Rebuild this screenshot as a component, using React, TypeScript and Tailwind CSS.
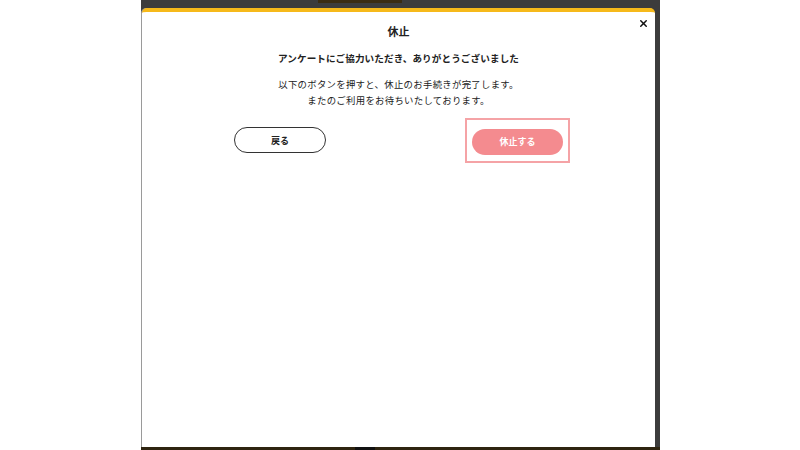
import { X } from 'lucide-react';

export default function App() {
  return (
    <div
      className="flex h-[450px] w-[800px] bg-white text-[#222]"
      style={{ fontFamily: '"Noto Sans CJK JP", "Noto Sans", sans-serif' }}
    >
      <div className="ml-[141px] flex h-full w-[519px] flex-col bg-[#3c3c3c]">
        {/* backdrop top strip */}
        <div className="flex h-[8px] shrink-0">
          <div className="ml-[177px] h-[3px] w-[84px] bg-[#3a2c12]" />
        </div>

        <div className="relative ml-px mr-[5px] flex h-[439px] shrink-0 flex-col items-center rounded-t-[5px] border-t-[4px] border-[#f6b91a] bg-white shadow-[-1px_0_0_#9a9a9a]">
          <button className="absolute right-[6px] top-[6px] text-[#111]">
            <X size={11} strokeWidth={3.2} />
          </button>

          <h2 className="mt-[11px] text-[11px] font-bold leading-4">休止</h2>
          <p className="mt-[11px] text-[9.6px] font-bold leading-4 tracking-[0.1px]">
            アンケートにご協力いただき、ありがとうございました
          </p>
          <div className="mt-[10px] text-center text-[9.4px] leading-4 tracking-[0.3px]">
            <p>以下のボタンを押すと、休止のお手続きが完了します。</p>
            <p>またのご利用をお待ちいたしております。</p>
          </div>

          <div className="mt-[10px] flex w-full items-center justify-between pl-[92px] pr-[85px]">
            <button className="h-[26px] w-[92px] rounded-full border border-[#333] text-[9px] font-bold">
              戻る
            </button>
            <div className="border-2 border-[#f5a3a6] px-[5px] py-[6px]">
              <button className="h-[26px] w-[91px] rounded-full bg-[#f48b8f] text-[9px] font-bold text-white">
                休止する
              </button>
            </div>
          </div>
        </div>

        <div className="flex h-[3px] shrink-0 bg-[#2e2410]">
          <div className="ml-[214px] h-full w-[20px] bg-[#111]" />
        </div>
      </div>
    </div>
  );
}
